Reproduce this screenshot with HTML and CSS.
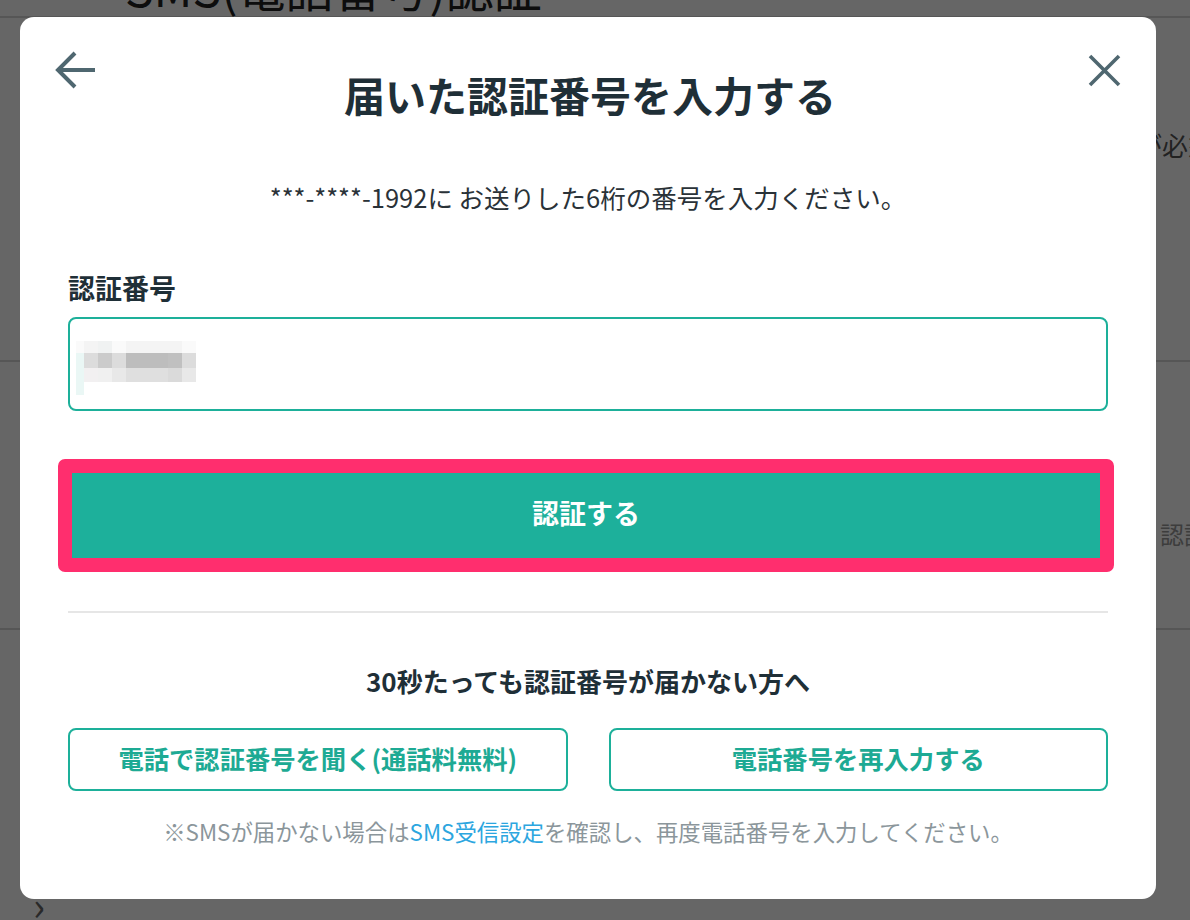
FILE: index.html
```html
<!DOCTYPE html>
<html lang="ja">
<head>
    <meta charset="UTF-8">
    <meta name="viewport" content="width=device-width, initial-scale=1.0">
    <title>SMS(電話番号)認証</title>
    <link rel="stylesheet" href="styles.css">
</head>
<body>
    <!-- 背景のページ -->
    <div class="page">
        <h1 class="page-title">SMS(電話番号)認証</h1>
        <div class="page-rule"></div>
        <p class="page-note">が必須</p>
        <div class="page-rule page-rule-mid"></div>
        <p class="page-sub">認証</p>
        <div class="page-rule page-rule-low"></div>
        <div class="page-chevron">›</div>
    </div>

    <!-- 認証番号モーダル -->
    <div class="overlay">
        <div class="modal">
            <div class="modal-header">
                <button class="icon-btn" aria-label="戻る">
                    <svg width="44" height="44" viewBox="0 0 44 44">
                        <path d="M41 22H5M21 5L4 22l17 17" fill="none" stroke="#4f6770" stroke-width="4"/>
                    </svg>
                </button>
                <h2 class="modal-title">届いた認証番号を入力する</h2>
                <button class="icon-btn" aria-label="閉じる">
                    <svg width="44" height="44" viewBox="0 0 44 44">
                        <path d="M8 8l29 29M37 8L8 37" fill="none" stroke="#4f6770" stroke-width="3.6"/>
                    </svg>
                </button>
            </div>

            <p class="modal-lead">***-****-1992に お送りした6桁の番号を入力ください。</p>

            <label class="field-label">認証番号</label>
            <div class="code-input">
                <div class="mosaic">
                    <span class="m0"></span><span class="m1"></span><span class="m2"></span><span class="m0"></span><span class="m1"></span><span class="m1"></span><span class="m1"></span><span class="m1"></span><span class="m0"></span>
                    <span class="t1"></span><span class="m3"></span><span class="m4"></span><span class="m3"></span><span class="m5"></span><span class="m5"></span><span class="m5"></span><span class="m6"></span><span class="m3"></span>
                    <span class="t1"></span><span class="m7"></span><span class="m8"></span><span class="m9"></span><span class="m10"></span><span class="m10"></span><span class="m10"></span><span class="m11"></span><span class="m9"></span>
                    <span class="t1"></span><span></span><span></span><span></span><span></span><span></span><span></span><span></span><span></span>
                </div>
            </div>

            <div class="highlight">
                <button class="submit-btn">認証する</button>
            </div>

            <hr class="divider">

            <h3 class="help-title">30秒たっても認証番号が届かない方へ</h3>
            <div class="help-actions">
                <button class="outline-btn">電話で認証番号を聞く(通話料無料)</button>
                <button class="outline-btn">電話番号を再入力する</button>
            </div>
            <p class="help-note">※SMSが届かない場合は<a href="#">SMS受信設定</a>を確認し、再度電話番号を入力してください。</p>
        </div>
    </div>
</body>
</html>
```

FILE: styles.css
```css
* {
    box-sizing: border-box;
}
html, body {
    margin: 0;
    height: 100%;
    overflow: hidden;
}
body {
    background: #fff;
    font-family: "Noto Sans CJK JP", "Noto Sans", sans-serif;
    color: #1f2f37;
}

/* 背景のページ */
.page {
    padding-left: 125px;
}
.page-title {
    margin: -42px 0 0;
    font-size: 48px;
    line-height: 1.2;
    font-weight: normal;
    color: #222;
}
.page-rule {
    height: 2px;
    background: #d6d6d6;
    margin: 0 0 0 -125px;
}
.page-note {
    margin: 109px 0 0 1011px;
    font-size: 26px;
    line-height: 36px;
    color: #555;
    white-space: nowrap;
}
.page-rule-mid {
    margin-top: 197px;
}
.page-sub {
    margin: 156px 0 0 1035px;
    font-size: 24px;
    line-height: 32px;
    color: #999;
    white-space: nowrap;
}
.page-rule-low {
    margin-top: 78px;
}
.page-chevron {
    margin: 254px 0 0 -92px;
    font-size: 40px;
    line-height: 40px;
    color: #666;
}

/* モーダル */
.overlay {
    position: fixed;
    top: 0;
    left: 0;
    right: 0;
    bottom: 0;
    background: rgba(0, 0, 0, 0.6);
    padding: 17px 0 0 20px;
}
.modal {
    width: 1136px;
    background: #fff;
    border-radius: 14px;
    padding: 0 48px 52px;
}
.modal-header {
    display: flex;
    align-items: flex-start;
    margin: 0 -18px 0 -14px;
    padding-top: 31px;
}
.icon-btn {
    width: 44px;
    height: 44px;
    padding: 0;
    border: none;
    background: none;
    cursor: pointer;
}
.icon-btn svg {
    display: block;
}
.modal-title {
    flex: 1;
    margin: 22px 0 0;
    text-align: center;
    font-size: 41px;
    line-height: 48px;
    font-weight: bold;
    color: #1f2f37;
}
.modal-lead {
    margin: 61px 0 0;
    text-align: center;
    font-size: 25.5px;
    line-height: 36px;
    color: #2a3238;
}
.field-label {
    display: block;
    margin-top: 55px;
    font-size: 27px;
    line-height: 36px;
    font-weight: bold;
    color: #1f2f37;
}
.code-input {
    margin-top: 11px;
    height: 94px;
    border: 2px solid #1db09a;
    border-radius: 8px;
    padding: 22px 0 0 6px;
}
.mosaic {
    display: grid;
    grid-template-columns: 8px repeat(8, 14px);
    grid-template-rows: 12px 15px 14px 13px;
}
.m0 { background: #fafafa; }
.m1 { background: #f4f4f4; }
.m2 { background: #f0f2f2; }
.m3 { background: #dcdcdc; }
.m4 { background: #cbcbcb; }
.m5 { background: #bdbdbd; }
.m6 { background: #c0c0c0; }
.m7 { background: #f2f0f1; }
.m8 { background: #f0f0f0; }
.m9 { background: #e8e8e8; }
.m10 { background: #dfdfdf; }
.m11 { background: #dadada; }
.t1 { background: #eaf7f5; }

/* 認証ボタン(ピンクの枠) */
.highlight {
    margin: 48px -6px 0 -10px;
    border: 14px solid #ff2e6e;
    border-radius: 7px;
}
.submit-btn {
    display: block;
    width: 100%;
    height: 85px;
    padding: 0 0 6px;
    border: none;
    background: #1db09b;
    color: #fff;
    font-family: inherit;
    font-size: 27px;
    font-weight: bold;
    cursor: pointer;
}
.divider {
    margin: 39px 0 0;
    border: none;
    height: 2px;
    background: #e6e6e6;
}
.help-title {
    margin: 50px 0 0;
    text-align: center;
    font-size: 26px;
    line-height: 36px;
    font-weight: bold;
    color: #1f2f37;
}
.help-actions {
    display: grid;
    grid-template-columns: 1fr 1fr;
    gap: 41px;
    margin-top: 29px;
}
.outline-btn {
    height: 63px;
    padding: 0 0 3px;
    border: 2px solid #1db09a;
    border-radius: 8px;
    background: #fff;
    color: #1daa94;
    font-family: inherit;
    font-size: 25.3px;
    font-weight: bold;
    cursor: pointer;
}
.help-note {
    margin: 24px 0 0;
    text-align: center;
    font-size: 22.4px;
    line-height: 32px;
    color: #8b969b;
}
.help-note a {
    color: #2ca6df;
    text-decoration: none;
}
```
